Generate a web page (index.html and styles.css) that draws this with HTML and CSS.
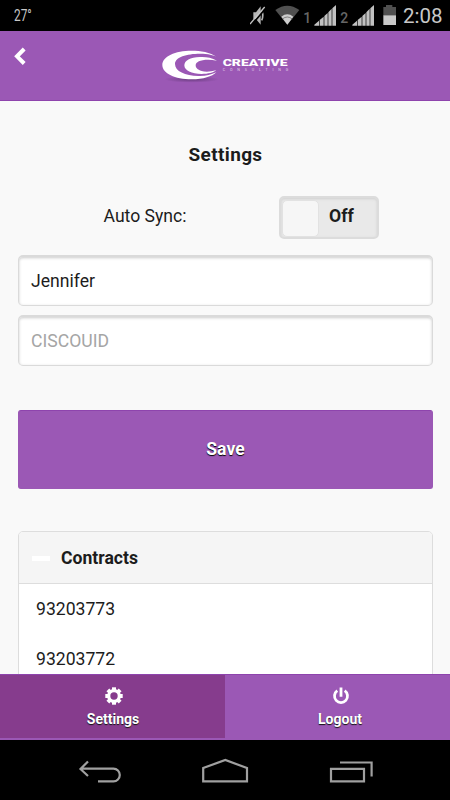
FILE: index.html
```html
<!DOCTYPE html>
<html lang="en">
<head>
<meta charset="utf-8">
<title>Settings</title>
<link rel="stylesheet" href="styles.css">
</head>
<body>
<div class="screen">
  <div class="status">
    <span class="temp">27°</span>
    <svg class="status-icons" width="156" height="31" viewBox="0 0 468 93">
      <path d="M5 37h8l14-18v55L13 57H5z" transform="translate(5 0)" fill="#b5b5b5"/>
      <path d="M35 32q7 14 0 29" fill="none" stroke="#b5b5b5" stroke-width="5"/>
      <path d="M4 76L46 26" stroke="#000" stroke-width="5"/>
      <path d="M0 72L44 21" stroke="#c4c4c4" stroke-width="4"/>
      <path d="M76 30Q112 4 148 30L112 74z" fill="#505050"/>
      <path d="M94 50Q112 36 130 50L112 74z" fill="#cdcdcd"/>
      <path d="M97 57Q112 45 127 57" fill="none" stroke="#555" stroke-width="2"/>
      <text class="sim" x="160" y="68">1</text>
      <text class="sim" x="271" y="68">2</text>
      <g fill="#c1c1c1">
        <path id="signal" d="M193 77v-3l14-12v15zM209 77V60l12-10v27zM223 77V48l10-9v38zM235 77V37l10-11v51zM247 77V25l11-10v62z"/>
        <use href="#signal" x="114"/>
      </g>
      <path d="M400 21h8v-6h19v6h11v26h-38z" fill="#505050"/>
      <path d="M400 46h38v29h-38z" fill="#c9c9c9"/>
    </svg>
    <span class="clock">2:08</span>
  </div>

  <header class="header">
    <svg class="back" width="13" height="19" viewBox="0 0 13 19"><path d="M11.200 2L4 9.300l7.200 7.200" fill="none" stroke="#fff" stroke-width="4"/></svg>
    <svg class="logo" width="150" height="50" viewBox="0 0 450 150">
      <defs><radialGradient id="shade"><stop offset="0" stop-color="#5c3470" stop-opacity=".75"/><stop offset="1" stop-color="#5c3470" stop-opacity="0"/></radialGradient></defs>
      <ellipse cx="125" cy="118" rx="82" ry="10" fill="url(#shade)"/>
      <path fill="#fff" d="M201 51C180 36 152 32 125 32C75 32 37 49 37 75C37 100 75 118 125 118C160 118 186 110 199 97C182 105 165 109 145 108C105 107 75 94 75 72C75 51 110 41 150 41C175 41 190 45 201 51z"/>
      <path fill="#fff" d="M201 62C184 53 168 50 150 51C120 52 103 62 103 76C103 92 125 102 155 102C174 102 190 98 199 91C180 96 165 96 155 93C142 89 137 84 137 76C137 64 160 55 201 62z"/>
      <text class="brand" transform="translate(218 79) scale(1.380 1)" textLength="141" lengthAdjust="spacingAndGlyphs">CREATIVE</text>
      <text class="tagline" x="218" y="94" textLength="197">CONSULTING</text>
    </svg>
  </header>

  <main class="content">
    <h1 class="title">Settings</h1>
    <div class="sync">
      <span class="sync-label">Auto Sync:</span>
      <div class="toggle"><span class="knob"></span><span class="toggle-text">Off</span></div>
    </div>
    <div class="field">Jennifer</div>
    <div class="field placeholder">CISCOUID</div>
    <div class="save">Save</div>
    <section class="contracts">
      <h2 class="contracts-head"><span class="minus"></span><span class="contracts-title">Contracts</span></h2>
      <div class="row">93203773</div>
      <div class="row">93203772</div>
    </section>
  </main>

  <footer class="tabs">
    <div class="tab active">
      <svg width="20" height="20" viewBox="-10 -10 20 20">
        <g fill="#fff"><path id="teeth" d="M-2-8.700h4v17.400h-4z"/><use href="#teeth" transform="rotate(45)"/><use href="#teeth" transform="rotate(90)"/><use href="#teeth" transform="rotate(135)"/><circle r="6.900"/></g>
        <circle r="3.700" fill="#863c8d"/>
      </svg>
      <span class="tab-label">Settings</span>
    </div>
    <div class="tab">
      <svg width="20" height="20" viewBox="0 0 20 20"><path d="M6.300 4.700A6.500 6.500 0 1 0 13.700 4.700M10 1.400V10.800" fill="none" stroke="#fff" stroke-width="2.800"/></svg>
      <span class="tab-label">Logout</span>
    </div>
  </footer>

  <nav class="nav">
    <svg width="450" height="60" viewBox="0 740 450 60" fill="none" stroke="#a0a0a0" stroke-width="2.200">
      <path d="M88 761.500L80.500 769L88 776M80.500 768.700H113.500A6.300 6.300 0 0 1 113.500 781.300H98"/>
      <path d="M203.200 781.300V768L225.300 760L247 768V781.300z"/>
      <path d="M331 768.800h33v12.500h-33zM340 762.500h31.600v14"/>
    </svg>
  </nav>
</div>
</body>
</html>
```
FILE: styles.css
```css
* { box-sizing: border-box; }
body { margin: 0; font-family: Roboto, "Liberation Sans", sans-serif; color: #1c1c1c; }
.screen { width: 450px; height: 800px; display: flex; flex-direction: column; overflow: hidden; background: #f9f9f9; }

.status { height: 31px; flex: none; display: flex; background: #000; color: #c8c8c8; }
.temp { width: 236px; padding-left: 14px; font-size: 16px; line-height: 32px; transform: scaleX(.74); transform-origin: 14px 0; }
.status-icons { flex: none; margin-left: 14px; }
.sim { font-size: 42px; font-weight: 500; fill: #666; }
.clock { margin-left: -3px; font-size: 20.500px; line-height: 33px; white-space: nowrap; }

.header { height: 70px; flex: none; display: flex; align-items: flex-start; background: #9b58b5; border-bottom: 1px solid #8e44ad; }
.back { margin: 16px 0 0 13px; }
.logo { margin: 9px 0 0 124px; }
.brand { font-size: 26px; font-weight: 900; fill: #fff; }
.tagline { font-size: 11px; fill: #e5d2ec; }

.content { flex: 1; min-height: 0; overflow: hidden; padding: 0 17px 0 18px; font-size: 17.600px; }
.title { margin: 42px 0 0; text-align: center; font-size: 19px; letter-spacing: .35px; line-height: 24px; font-weight: 700; }
.sync { display: flex; margin: 29px 0 0 85.500px; height: 43px; }
.sync-label { width: 175.500px; line-height: 40px; }
.toggle { width: 100px; height: 43px; padding: 2px; display: flex; border: 2px solid #dcdcdc; border-radius: 5px; background: #e9e9e9; box-shadow: inset 0 1px 3px #d0d0d0; }
.knob { width: 37px; height: 37px; margin: 0 0 0 -1px; border: 1px solid #e2e2e2; border-radius: 5px; background: #f6f6f6; }
.toggle-text { margin-left: 10px; line-height: 32px; font-weight: 700; }
.field { height: 51px; margin-top: 16px; padding-left: 12px; line-height: 49px; background: #fff; border: 1px solid #dadada; border-top-width: 2px; border-radius: 5px; box-shadow: inset 0 1px 3px #ccc; }
.field + .field { margin-top: 9px; }
.placeholder { color: #a5a5a5; }
.save { height: 79px; margin-top: 44px; text-align: center; line-height: 77px; font-weight: 700; color: #fff; text-shadow: 0 1px 1px #000; background: #9b58b5; border: 1px solid #9b58b5; border-top-color: #8e44ad; border-radius: 3px; }
.contracts { height: 190px; margin-top: 42px; border: 1px solid #ddd; border-radius: 5px; background: #fff; overflow: hidden; }
.contracts-head { display: flex; align-items: center; height: 52px; margin: 0; padding-left: 13px; font-size: 17.600px; font-weight: 700; background: #f5f5f5; border-bottom: 1px solid #ddd; }
.minus { width: 18px; height: 5px; margin-right: 11px; margin-top: 2px; background: #fff; }
.row { height: 50px; padding-left: 17px; line-height: 50px; }

.tabs { height: 66px; flex: none; display: flex; background: #9b58b5; border-top: 1px solid #8e44ad; }
.tab { width: 225px; height: 65px; padding-top: 11px; padding-left: 6px; display: flex; flex-direction: column; align-items: center; color: #fff; }
.active { height: 63px; padding-left: 2px; background: #863c8d; }
.tab-label { margin-top: 4px; font-size: 14px; line-height: 18px; font-weight: 700; text-shadow: 0 1px 1px #111; margin-right: 1px; }
.nav { height: 60px; flex: none; background: #000; }
```
